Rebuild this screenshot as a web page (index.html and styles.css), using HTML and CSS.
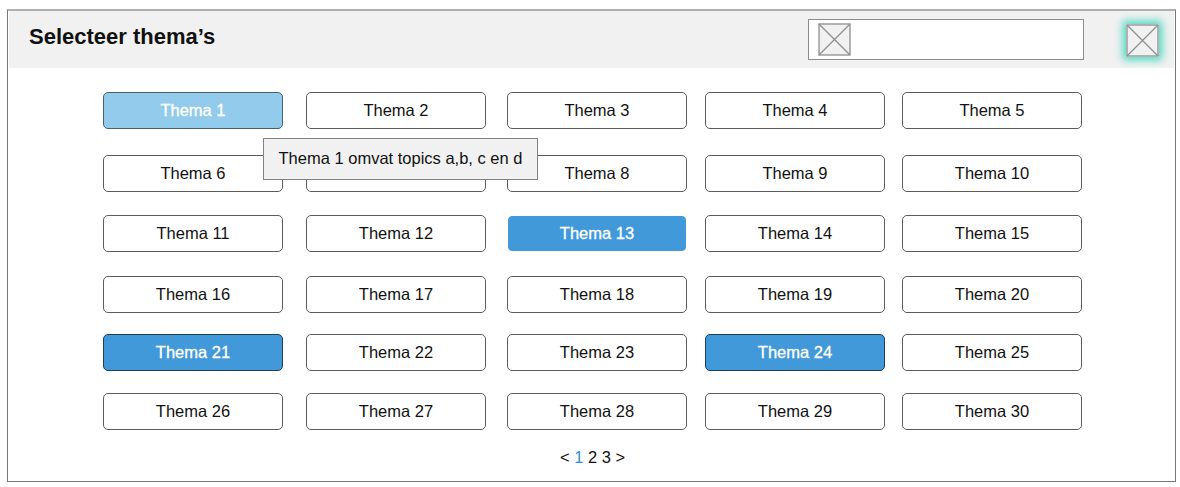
FILE: index.html
```html
<!DOCTYPE html>
<html lang="nl">
<head>
<meta charset="utf-8">
<title>Selecteer thema’s</title>
<link rel="stylesheet" href="styles.css">
</head>
<body>
<main class="panel">
  <header class="header">
    <h1 class="title">Selecteer thema’s</h1>
    <div class="search">
      <svg class="icon" viewBox="0 0 33 33"><rect x="1" y="1" width="31" height="31"/><path d="M1 1L32 32M32 1L1 32"/></svg>
    </div>
    <button class="close" aria-label="Sluiten">
      <svg class="icon" viewBox="0 0 33 33"><rect x="1" y="1" width="31" height="31"/><path d="M1 1L32 32M32 1L1 32"/></svg>
    </button>
  </header>
  <section class="themes">
    <button class="theme theme-hover">Thema 1<span class="tooltip">Thema 1 omvat topics a,b, c en d</span></button>
    <button class="theme">Thema 2</button>
    <button class="theme">Thema 3</button>
    <button class="theme">Thema 4</button>
    <button class="theme">Thema 5</button>
    <button class="theme">Thema 6</button>
    <button class="theme" aria-label="Thema 7"></button>
    <button class="theme">Thema 8</button>
    <button class="theme">Thema 9</button>
    <button class="theme">Thema 10</button>
    <button class="theme">Thema 11</button>
    <button class="theme">Thema 12</button>
    <button class="theme theme-selected theme-borderless">Thema 13</button>
    <button class="theme">Thema 14</button>
    <button class="theme">Thema 15</button>
    <button class="theme">Thema 16</button>
    <button class="theme">Thema 17</button>
    <button class="theme">Thema 18</button>
    <button class="theme">Thema 19</button>
    <button class="theme">Thema 20</button>
    <button class="theme theme-selected">Thema 21</button>
    <button class="theme">Thema 22</button>
    <button class="theme">Thema 23</button>
    <button class="theme theme-selected">Thema 24</button>
    <button class="theme">Thema 25</button>
    <button class="theme">Thema 26</button>
    <button class="theme">Thema 27</button>
    <button class="theme">Thema 28</button>
    <button class="theme">Thema 29</button>
    <button class="theme">Thema 30</button>
  </section>
  <nav class="pager">&lt; <span class="current">1</span> 2 3 &gt;</nav>
</main>
</body>
</html>
```
FILE: styles.css
```css
* { box-sizing: border-box; }

body {
  margin: 0;
  background: #fff;
  font-family: "Liberation Sans", Arial, sans-serif;
  font-size: 16px;
  color: #111;
}

.panel {
  width: 1169px;
  height: 473px;
  margin: 9px 0 0 7px;
  border: 1px solid #777;
  border-top: 2px solid #b0b0b0;
}

.header {
  display: flex;
  align-items: flex-start;
  height: 57px;
  margin: 0 1px;
  padding: 8px 15px 0 20px;
  background: #f1f1f1;
}

.title {
  flex: 1;
  margin: 5px 0 0;
  font-size: 22px;
  line-height: 26px;
}

.search {
  width: 276px;
  height: 41px;
  padding: 3px 9px;
  background: #fff;
  border: 1px solid #8c8c8c;
}

.icon {
  display: block;
  width: 33px;
  height: 33px;
  fill: #f1f1f1;
  stroke: #8f8f8f;
  stroke-width: 1.3;
}

.close {
  width: 33px;
  height: 33px;
  margin: 5px 0 0 42px;
  padding: 0;
  border: 0;
  background: none;
  box-shadow: 0 0 8px 3px #4bd9c0;
}

.themes {
  display: grid;
  grid-template-columns: 203px 201px 198px 197px 180px;
  grid-template-rows: 63px 60px 61px 58px 59px 37px;
  margin: 24px 0 0 95px;
}

.theme {
  position: relative;
  width: 180px;
  height: 37px;
  padding: 0;
  border: 1px solid #5c5c5c;
  border-radius: 5px;
  background: #fff;
  color: #111;
  font: inherit;
  font-size: 16.5px;
}

.theme-hover {
  z-index: 1;
  background: #93cbec;
  border-color: #46606f;
  color: #fff;
  -webkit-text-stroke: 0.3px #fff;
}

.theme-selected {
  background: #4299da;
  border-color: #1c3e58;
  color: #fff;
  -webkit-text-stroke: 0.3px #fff;
}

.theme-borderless {
  width: 178px;
  height: 35px;
  margin: 1px;
  border-color: #4299da;
  border-radius: 4px;
}

.tooltip {
  position: absolute;
  left: 159px;
  top: 45px;
  width: 275px;
  height: 42px;
  border: 1px solid #838383;
  background: #f1f1f1;
  color: #111;
  line-height: 39px;
  white-space: nowrap;
  -webkit-text-stroke: 0;
}

.pager {
  width: 100%;
  margin-top: 17px;
  padding-left: 2px;
  text-align: center;
  font-size: 16.5px;
  line-height: 20px;
}

.current { color: #2f8fd8; }
```
